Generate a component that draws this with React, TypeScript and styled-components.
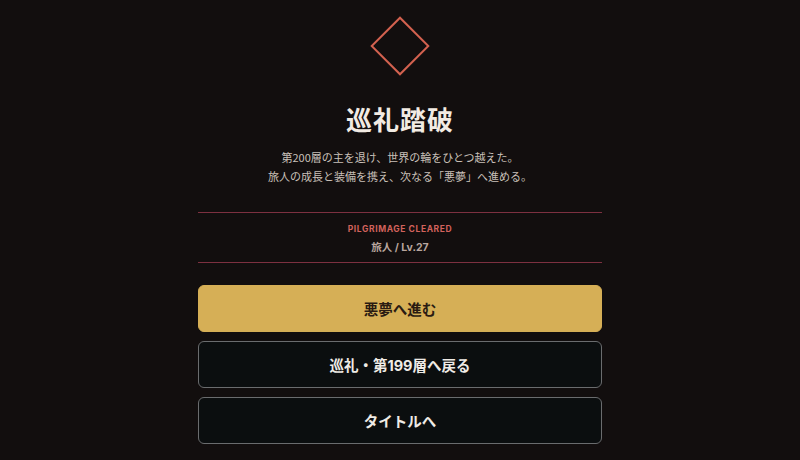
import React from "react";
import styled, { createGlobalStyle } from "styled-components";

const Global = createGlobalStyle`
  html, body { margin: 0; padding: 0; background: #120e0e; }
  body { font-family: "Noto Sans CJK JP", "Noto Sans", sans-serif; }
`;

const Page = styled.div`
  width: 800px;
  height: 460px;
  display: flex;
  flex-direction: column;
  align-items: center;
  overflow: hidden;
  background: #120e0e;
`;

const Emblem = styled.div`
  margin-top: 16px;
  width: 60px;
  height: 60px;
  display: flex;
  align-items: center;
  justify-content: center;
`;

const Title = styled.h1`
  margin: 25px 0 0;
  font-family: "Noto Sans CJK JP", serif;
  font-size: 26px;
  line-height: 36px;
  font-weight: 700;
  color: #f2ebe3;
  letter-spacing: 1px;
`;

const Lead = styled.p`
  margin: 11px 0 0;
  font-size: 11px;
  line-height: 19px;
  color: #c9c0b9;
  text-align: center;
`;

const Column = styled.div`
  width: 404px;
  display: flex;
  flex-direction: column;
`;

const Record = styled.div`
  margin-top: 26px;
  border-top: 1px solid #7d3040;
  border-bottom: 1px solid #7d3040;
  height: 47px;
  padding-top: 2px;
  display: flex;
  flex-direction: column;
  align-items: center;
  justify-content: center;
  gap: 5px;
`;

const Label = styled.div`
  font-family: "Inter", "Noto Sans", sans-serif;
  font-size: 8.5px;
  font-weight: 700;
  letter-spacing: 0.6px;
  color: #d2625c;
  line-height: 12px;
`;

const Stat = styled.div`
  font-family: "Inter", "Noto Sans CJK JP", sans-serif;
  font-size: 10.5px;
  font-weight: 700;
  color: #b9a69e;
  line-height: 15px;
`;

const Buttons = styled.div`
  margin-top: 22px;
  display: flex;
  flex-direction: column;
  gap: 9px;
`;

const Button = styled.button<{ $primary?: boolean }>`
  height: 47px;
  border-radius: 6px;
  box-sizing: border-box;
  font-family: "Inter", "Noto Sans CJK JP", sans-serif;
  font-size: 14.5px;
  font-weight: 700;
  cursor: pointer;
  border: 1px solid ${(p) => (p.$primary ? "#d6af56" : "#6a6c6e")};
  background: ${(p) => (p.$primary ? "#d6af56" : "#0b0e0f")};
  color: ${(p) => (p.$primary ? "#2a1b12" : "#efebe6")};
`;

export default function App() {
  return (
    <Page>
      <Global />
      <Emblem>
        <svg width="60" height="60" viewBox="0 0 60 60">
          <rect
            x="10"
            y="10"
            width="40"
            height="40"
            transform="rotate(45 30 30)"
            fill="none"
            stroke="#d3614f"
            strokeWidth="2"
          />
        </svg>
      </Emblem>
      <Title>巡礼踏破</Title>
      <Lead>
        第200層の主を退け、世界の輪をひとつ越えた。
        <br />
        旅人の成長と装備を携え、次なる「悪夢」へ進める。
      </Lead>
      <Column>
        <Record>
          <Label>PILGRIMAGE CLEARED</Label>
          <Stat>旅人 / Lv.27</Stat>
        </Record>
        <Buttons>
          <Button $primary>悪夢へ進む</Button>
          <Button>巡礼・第199層へ戻る</Button>
          <Button>タイトルへ</Button>
        </Buttons>
      </Column>
    </Page>
  );
}
